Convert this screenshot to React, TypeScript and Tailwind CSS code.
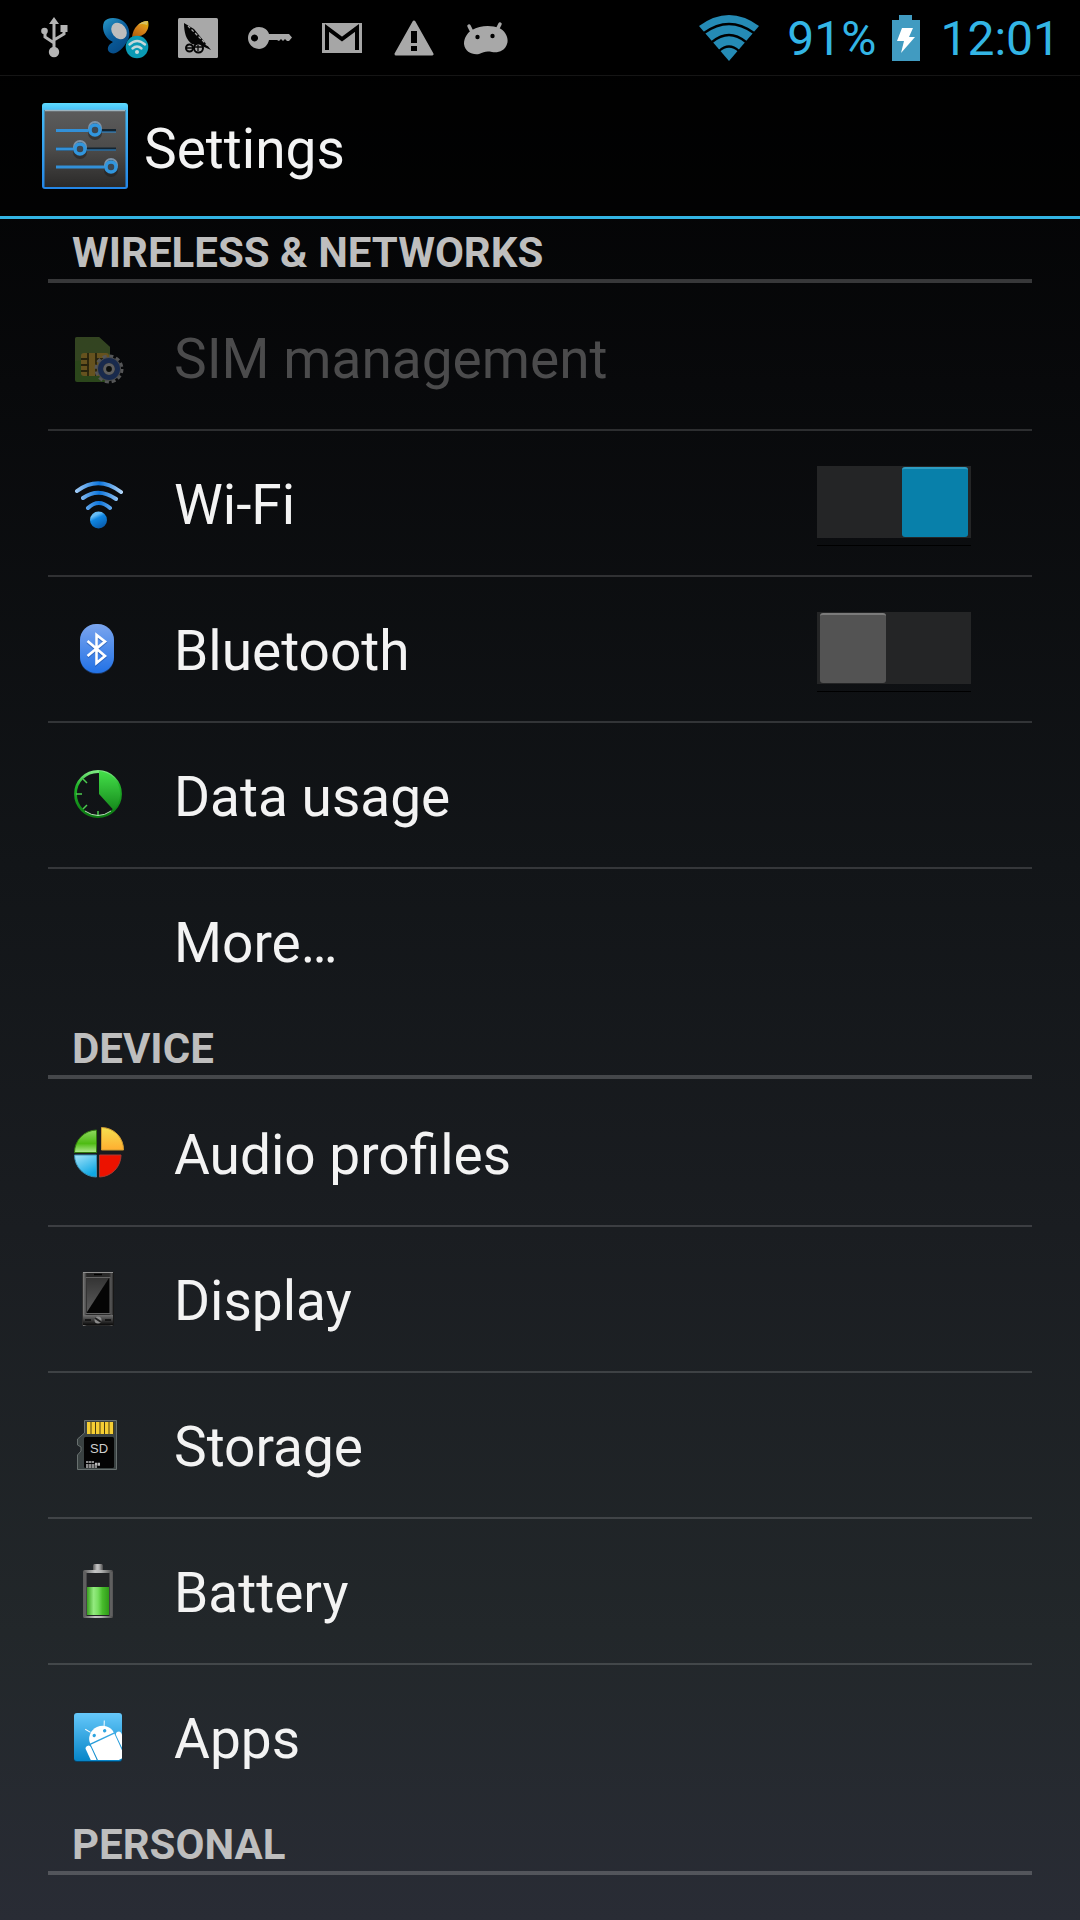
import { useState, type ReactNode } from "react";

function UsbIcon() {
  return (
    <svg width="28" height="42" viewBox="0 0 28 42" fill="none" stroke="#b4b4b4" strokeWidth="3">
      <path d="M14 6V34M14 26L5 20V13M14 23L24 17V10" />
      <path d="M14 0L19 7H9Z M20.5 8h7v7h-7z" fill="#b4b4b4" stroke="none" />
      <circle cx="4.5" cy="14" r="3.3" fill="#b4b4b4" stroke="none" />
      <circle cx="14" cy="35" r="5.2" fill="#b4b4b4" stroke="none" />
    </svg>
  );
}

function ButterflyIcon() {
  return (
    <svg width="46" height="42" viewBox="0 0 46 42">
      <defs>
        <linearGradient id="bfWing" x1="0" y1="0" x2="0.6" y2="1">
          <stop offset="0" stopColor="#2a9bc9" />
          <stop offset="0.5" stopColor="#0a5e9c" />
          <stop offset="1" stopColor="#064a86" />
        </linearGradient>
        <linearGradient id="bfGold" x1="0.8" y1="0" x2="0.2" y2="1">
          <stop offset="0" stopColor="#e0b400" />
          <stop offset="0.4" stopColor="#d98a1c" />
          <stop offset="1" stopColor="#b35f0c" />
        </linearGradient>
      </defs>
      <path d="M1 5C4 0 14 0 20 4C26 8 28 17 25 23C20 32 13 38 8 36C3 34 4 28 10 25C2 22 -2 12 1 5Z" fill="url(#bfWing)" />
      <ellipse cx="16" cy="14" rx="7" ry="9" transform="rotate(-38 16 14)" fill="#bdbdbd" />
      <path d="M29 20C30 11 36 4 45 4C47 11 43 18 36 19Z" fill="url(#bfGold)" />
      <path d="M35 8Q39 4 45 4L44 8Q39 6 35 8Z" fill="#d8c060" />
      <circle cx="34" cy="30" r="11.3" fill="#0a9ab4" />
      <path d="M26.5 27.5Q34 20.5 42 27.5M29.5 31.5Q34 27.5 38.5 31.5" fill="none" stroke="#c6d8da" strokeWidth="2.4" strokeLinecap="round" />
      <circle cx="34" cy="35" r="2" fill="#c6d8da" />
    </svg>
  );
}

function DishIcon() {
  return (
    <svg width="40" height="40" viewBox="0 0 40 40">
      <rect width="40" height="40" rx="1.5" fill="#a8a8a8" />
      <path d="M6 5C6 14 8 22 14 26L24 28L33 32L25 22L16 11Z" fill="#050505" />
      <path d="M10 8L31 29" stroke="#a8a8a8" strokeWidth="1.3" strokeDasharray="3 2" />
      <g fill="#a8a8a8" stroke="#050505" strokeWidth="2">
        <circle cx="11.5" cy="30" r="3.5" />
        <circle cx="20.5" cy="30" r="4.5" />
      </g>
      <path d="M9 30h5M17 29h7M20 27v6" stroke="#050505" strokeWidth="1.3" />
    </svg>
  );
}

function KeyIcon() {
  return (
    <svg width="44" height="24" viewBox="0 0 44 24" fill="#a8a8a8">
      <path
        fillRule="evenodd"
        d="M11 1C16 1 20 4 21 8H41L44 11.5L41 15H39L37 13L35 15L33 13L31 15L29 14H21C20 19 16 23 11 23A11 11 0 0 1 11 1ZM6.5 8.5a3.5 3.5 0 1 0 .01 0Z"
      />
    </svg>
  );
}

function GmailIcon() {
  return (
    <svg width="40" height="30" viewBox="0 0 40 30">
      <path d="M0 0H40V30H0Z" fill="#a6a6a6" />
      <path d="M5 27V5L20 16L35 5V27" fill="none" stroke="#000" strokeWidth="4" />
    </svg>
  );
}

function WarningIcon() {
  return (
    <svg width="40" height="36" viewBox="0 0 40 36">
      <path d="M20 2L38 34H2Z" fill="#a8a8a8" stroke="#a8a8a8" strokeWidth="3" strokeLinejoin="round" />
      <path d="M17 11h6v12h-6zM17 26h6v5h-6z" fill="#000" />
    </svg>
  );
}

function DroidHeadIcon() {
  return (
    <svg width="44" height="34" viewBox="0 0 44 34">
      <path d="M5 5L8 11M36 3L33 9" stroke="#a8a8a8" strokeWidth="3.5" strokeLinecap="round" />
      <path d="M8 9C16 4 28 4 35 7C42 10 45 18 43 23C41 30 34 32 28 31C22 30 20 31 15 33C8 34 1 31 0 23C0 17 3 12 8 9Z" fill="#a8a8a8" />
      <circle cx="13.5" cy="16" r="2.2" fill="#000" />
      <circle cx="28.5" cy="15" r="2.2" fill="#000" />
    </svg>
  );
}

function SignalIcon() {
  return (
    <svg width="60" height="48" viewBox="0 0 60 48">
      <path d="M0 12Q30 -10 60 12L30 47Z" fill="#258bb5" />
      <path d="M5 19Q30 1 55 19M13 28Q30 14 47 28M20 37Q30 28 40 37" fill="none" stroke="#000" strokeWidth="2.3" />
    </svg>
  );
}

function ChargingIcon() {
  return (
    <svg width="28" height="46" viewBox="0 0 28 46">
      <path d="M7 0h13v5h8v41H0V5h7z" fill="#419bc1" />
      <path d="M10 13H21L17 22H23L9 38L12 26H5Z" fill="#fff" />
    </svg>
  );
}

function SettingsIcon() {
  return (
    <svg width="86" height="86" viewBox="0 0 86 86">
      <defs>
        <linearGradient id="frame" x1="0" y1="0" x2="0" y2="1">
          <stop offset="0" stopColor="#5fdcff" />
          <stop offset="0.1" stopColor="#43b9f5" />
          <stop offset="1" stopColor="#2385e6" />
        </linearGradient>
        <linearGradient id="plate" x1="0" y1="0" x2="0" y2="1">
          <stop offset="0" stopColor="#5c5c5c" />
          <stop offset="0.5" stopColor="#4c4b4a" />
          <stop offset="1" stopColor="#2b2a29" />
        </linearGradient>
      </defs>
      <rect width="86" height="86" rx="3" fill="url(#frame)" />
      <rect x="2.5" y="7" width="81" height="77" fill="url(#plate)" />
      <path d="M3 7.5H83" stroke="#9db4bf" strokeWidth="1.5" />
      <path d="M14 27.5H74M14 46H74" stroke="#142430" strokeWidth="3" />
      <g stroke="#3290d8" strokeWidth="3">
        <path d="M14 27.5H48M14 46H34M14 64H64" />
        <path d="M58 29H74M44 47H74" strokeWidth="1" />
      </g>
      {[
        [53, 27],
        [38, 46],
        [69, 64],
      ].map(([x, y]) => (
        <g key={x}>
          <circle cx={x} cy={y + 3} r="7" fill="#1d1c1c" opacity="0.5" />
          <circle cx={x} cy={y - 2} r="6" fill="none" stroke="#7d93a8" strokeWidth="2" />
          <circle cx={x} cy={y} r="5" fill="#3c4650" stroke="#3196de" strokeWidth="3.5" />
        </g>
      ))}
    </svg>
  );
}

function SimIcon() {
  return (
    <svg width="56" height="56" viewBox="0 -4 56 56" opacity="0.45">
      <path d="M5 6Q5 4 7 4H29L40 14V47Q40 49 38 49H7Q5 49 5 47Z" fill="#57912f" />
      <path d="M7 4H29L40 14V24L5 28V6Q5 4 7 4Z" fill="#748c48" opacity="0.6" />
      <rect x="11" y="20" width="28" height="23" rx="3" fill="#d9ad38" />
      <path d="M18 20V43M26 20V43M11 26H19M11 32H19M11 38H19M26 26H39" stroke="#4f4512" strokeWidth="1.8" />
      <circle cx="39" cy="36" r="13" fill="none" stroke="#b4b4b4" strokeWidth="3" strokeDasharray="4 2.8" />
      <circle cx="39" cy="36" r="12" fill="#9e9e9e" />
      <circle cx="39" cy="36" r="8.5" fill="#16202a" stroke="#2e549e" strokeWidth="5" />
      <circle cx="39" cy="36" r="4.4" fill="#10140c" stroke="#c6c6c6" strokeWidth="3" />
    </svg>
  );
}

function WifiIcon() {
  return (
    <svg width="56" height="56" viewBox="0 -2 56 56">
      <defs>
        <linearGradient id="wArc" x1="5" x2="54" y1="0" y2="0" gradientUnits="userSpaceOnUse">
          <stop offset="0" stopColor="#a6cef6" />
          <stop offset="0.5" stopColor="#0d76dd" />
          <stop offset="1" stopColor="#c0ddfa" />
        </linearGradient>
        <linearGradient id="wDot" x1="0" x2="0.5" y1="0" y2="1">
          <stop offset="0.3" stopColor="#66bdf6" />
          <stop offset="0.5" stopColor="#0f86e2" />
          <stop offset="1" stopColor="#0a5fb0" />
        </linearGradient>
      </defs>
      <path
        d="M7 14Q28.5 -2 51 15M13 21Q28.5 10 46 22M18 31Q28.5 21 40 31"
        fill="none"
        stroke="url(#wArc)"
        strokeWidth="4"
        strokeLinecap="round"
      />
      <circle cx="28.5" cy="43" r="8.5" fill="url(#wDot)" />
    </svg>
  );
}

function BluetoothIcon() {
  return (
    <svg width="56" height="56" viewBox="0 0 56 56">
      <defs>
        <linearGradient id="bt" x1="0" y1="0" x2="0" y2="1">
          <stop offset="0" stopColor="#7ba5ee" />
          <stop offset="1" stopColor="#2272e6" />
        </linearGradient>
      </defs>
      <rect x="10" y="4" width="34" height="49" rx="16" fill="#1b355f" />
      <rect x="10" y="3" width="34" height="49" rx="16" fill="url(#bt)" />
      <path d="M17.5 21L35 36L26.5 43V15L35 21.5L17.5 36" fill="none" stroke="#1b4d9c" strokeWidth="3" opacity="0.5" />
      <path d="M17.5 20L35 35L26.5 42V14L35 20.5L17.5 35" fill="none" stroke="#fff" strokeWidth="2.6" />
    </svg>
  );
}

function DataIcon() {
  return (
    <svg width="56" height="56" viewBox="0 0 56 56">
      <defs>
        <linearGradient id="dFill" x1="0" y1="0" x2="0" y2="1">
          <stop offset="0" stopColor="#44e04a" />
          <stop offset="1" stopColor="#168a1c" />
        </linearGradient>
        <linearGradient id="dRing" x1="0" y1="0" x2="0" y2="1">
          <stop offset="0" stopColor="#7be880" />
          <stop offset="0.3" stopColor="#22b42a" />
          <stop offset="1" stopColor="#0c7a12" />
        </linearGradient>
      </defs>
      <circle cx="28" cy="27" r="22.5" fill="none" stroke="url(#dRing)" strokeWidth="2.8" />
      <path d="M29 27V4A23 23 0 0 1 43.5 43Z" fill="url(#dFill)" />
      <path d="M6 27H12M28 44V49M13 12L17 16M13 42L17 38" stroke="#4ccc50" strokeWidth="1.5" />
      <path d="M15 44Q28 53 41 44" fill="none" stroke="#b4dcb6" strokeWidth="1" />
    </svg>
  );
}

function AudioIcon() {
  return (
    <svg width="56" height="56" viewBox="0 1 56 56">
      <defs>
        <linearGradient id="aG" x1="0" y1="0" x2="0" y2="1">
          <stop offset="0" stopColor="#8fd860" />
          <stop offset="0.6" stopColor="#4fbc14" />
          <stop offset="1" stopColor="#b0e890" />
        </linearGradient>
        <linearGradient id="aY" x1="0" y1="0" x2="0" y2="1">
          <stop offset="0" stopColor="#f4e050" />
          <stop offset="1" stopColor="#ffae30" />
        </linearGradient>
        <linearGradient id="aB" x1="0" y1="0" x2="0.5" y2="1">
          <stop offset="0" stopColor="#a4e4fa" />
          <stop offset="1" stopColor="#10a8e4" />
        </linearGradient>
      </defs>
      <path d="M26.5 28.5H4.5A22.5 22.5 0 0 1 26.5 6Z" fill="url(#aG)" stroke="#347c10" />
      <path d="M31.5 26V3.5A22 22 0 0 1 53.5 26Z" fill="url(#aY)" stroke="#ce9a30" />
      <path d="M26.5 31V53A22 22 0 0 1 4.5 31Z" fill="url(#aB)" stroke="#3a90b4" />
      <path d="M29.5 31H51A22 22 0 0 1 29.5 53Z" fill="#ec1200" stroke="#a83a32" />
    </svg>
  );
}

function DisplayIcon() {
  return (
    <svg width="56" height="56" viewBox="0 0 56 56">
      <defs>
        <linearGradient id="phBody" x1="0" x2="1" y1="0" y2="0">
          <stop offset="0" stopColor="#0c0c0c" />
          <stop offset="0.05" stopColor="#7a7a7a" />
          <stop offset="0.15" stopColor="#242424" />
          <stop offset="0.85" stopColor="#2c2c2c" />
          <stop offset="0.93" stopColor="#505050" />
          <stop offset="1" stopColor="#080808" />
        </linearGradient>
        <linearGradient id="phGlass" x1="0" x2="0" y1="0" y2="1">
          <stop offset="0" stopColor="#343434" />
          <stop offset="1" stopColor="#5c5c5c" />
        </linearGradient>
        <linearGradient id="phKeys" x1="0" x2="0" y1="0" y2="1">
          <stop offset="0" stopColor="#707070" />
          <stop offset="1" stopColor="#0a0a0a" />
        </linearGradient>
      </defs>
      <rect x="12" y="1" width="32" height="54" rx="1.5" fill="url(#phBody)" />
      <path d="M13 1.5H43" stroke="#909090" />
      <path d="M24 3.5H32" stroke="#000" strokeWidth="1.5" />
      <rect x="16" y="6.5" width="24" height="36" fill="#050505" stroke="#646464" />
      <path d="M17 7H39L17 41Z" fill="url(#phGlass)" />
      <path d="M13 44H43V54H13Z" fill="url(#phKeys)" />
      <circle cx="28" cy="49" r="3.5" fill="#8c8c8c" />
      <path d="M25 47l6 4" stroke="#202020" strokeWidth="2" />
      <path d="M15 49H21M35 49H41" stroke="#0a0a0a" strokeWidth="1.5" />
    </svg>
  );
}

function StorageIcon() {
  return (
    <svg width="56" height="56" viewBox="0 0 56 56">
      <path d="M14.5 3.5H46.5V52.5H7.5V38L11 34V30L7.5 28V22L14.5 16Z" fill="#3a4242" stroke="#68706f" />
      <path d="M17 5h27v12H17z" fill="#4a3d10" />
      {[17, 21.5, 26, 30.5, 35, 39.5].map((x) => (
        <rect key={x} x={x} y="5" width="3.5" height="12" fill="#f5ce34" />
      ))}
      <rect x="14" y="20" width="30" height="31" rx="1.5" fill="#040404" />
      <text x="20" y="36" fill="#d0d0d0" fontSize="13" fontFamily="Liberation Sans, sans-serif">SD</text>
      <path d="M16 45H24M16 48H30M16 50H27M25 46.5H30" stroke="#b8b8b8" strokeWidth="1.5" strokeDasharray="2.5 .5" />
    </svg>
  );
}

function BatteryIcon() {
  return (
    <svg width="56" height="56" viewBox="0 0 56 56">
      <defs>
        <linearGradient id="metal" x1="0" x2="1" y1="0" y2="0">
          <stop offset="0" stopColor="#555" />
          <stop offset="0.4" stopColor="#c4c4c4" />
          <stop offset="0.6" stopColor="#b4b4b4" />
          <stop offset="1" stopColor="#484848" />
        </linearGradient>
        <linearGradient id="charge" x1="0" x2="1" y1="0" y2="0">
          <stop offset="0" stopColor="#38a01e" />
          <stop offset="0.3" stopColor="#94ea80" />
          <stop offset="0.5" stopColor="#78de60" />
          <stop offset="0.7" stopColor="#48bc2c" />
          <stop offset="1" stopColor="#2f9a18" />
        </linearGradient>
      </defs>
      <rect x="23" y="1" width="10" height="8" rx="1.5" fill="url(#metal)" />
      <rect x="13" y="7" width="30" height="48" rx="1.5" fill="url(#metal)" />
      <path d="M15 9V53M41 9V53" stroke="#606060" strokeWidth="3" />
      <rect x="16.5" y="10" width="23" height="43" fill="#222326" />
      <rect x="17" y="24" width="22" height="28" fill="url(#charge)" />
    </svg>
  );
}

function AppsIcon() {
  return (
    <svg width="56" height="56" viewBox="0 0 56 56">
      <defs>
        <linearGradient id="tile" x1="0" y1="0" x2="0" y2="1">
          <stop offset="0" stopColor="#66c8fa" />
          <stop offset="1" stopColor="#0685c8" />
        </linearGradient>
        <clipPath id="tileClip">
          <rect x="4" y="4" width="48" height="47" rx="2" />
        </clipPath>
      </defs>
      <rect x="4" y="6" width="48" height="47" rx="3" fill="#07456a" />
      <rect x="4" y="4" width="48" height="48" rx="3" fill="url(#tile)" />
      <g clipPath="url(#tileClip)">
        <g transform="translate(32 29) rotate(-25)" fill="#fff">
          <path d="M-13 0A13 12 0 0 1 13 0Z" />
          <path d="M-8 -10L-11.5 -15M7 -10L9.5 -15" stroke="#fff" strokeWidth="1" />
          <path d="M-13 1.5H13V24Q13 27 10 27H-10Q-13 27 -13 24Z" />
          <rect x="-19.5" y="1" width="5.5" height="18" rx="2.7" />
          <rect x="14" y="1" width="5.5" height="18" rx="2.7" />
          <circle cx="-6" cy="-5.5" r="1.7" fill="#2ea4e0" />
          <circle cx="5.5" cy="-5.5" r="1.7" fill="#2ea4e0" />
        </g>
      </g>
    </svg>
  );
}

function Row({ label, icon, disabled, control }: { label: string; icon?: ReactNode; disabled?: boolean; control?: ReactNode }) {
  return (
    <li className="box-content flex h-36 items-center">
      <button
        type="button"
        disabled={disabled}
        className="flex h-full flex-1 items-center gap-12 pl-[22px] text-left text-[55px] leading-[64px] text-[#f3f3f3] disabled:text-[#4b4b4c]"
      >
        <span className="h-14 w-14 shrink-0">{icon}</span>
        <span className="pt-1">{label}</span>
      </button>
      {control}
    </li>
  );
}

function Toggle({ label, initial }: { label: string; initial: boolean }) {
  const [on, setOn] = useState(initial);
  return (
    <label className="relative mt-1.5 mr-[61px] h-20 w-[154px] shrink-0 border-b border-black">
      <input type="checkbox" role="switch" aria-label={label} checked={on} onChange={() => setOn(!on)} className="peer sr-only" />
      <span className="flex h-18 justify-start bg-[#242526] px-[3px] py-px peer-checked:justify-end peer-checked:[&>span]:border-[#2e9cc2] peer-checked:[&>span]:bg-[#0880aa]">
        <span className="h-[70px] w-[66px] rounded-[3px] border-t-2 border-[#7b7b7b] bg-[#535353]" />
      </span>
    </label>
  );
}

function Section({ title, children }: { title: string; children?: ReactNode }) {
  return (
    <section>
      <h2 className="border-b-4 border-white/20 px-6 pt-2.5 pb-0.5 text-[42px] leading-[48px] font-bold text-[#bebebe]">{title}</h2>
      {children && <ul className="divide-y-2 divide-white/15 py-0.5">{children}</ul>}
    </section>
  );
}

const notifications = [UsbIcon, ButterflyIcon, DishIcon, KeyIcon, GmailIcon, WarningIcon, DroidHeadIcon];

export default function App() {
  return (
    <div className="min-h-screen bg-[linear-gradient(to_bottom,#000_0%,#08090b_20%,#121518_45%,#1a1d21_64%,#22272a_85%,#292c35_100%)] font-['Roboto',sans-serif]">
      <div className="flex h-[76px] items-center justify-between border-b border-[#151515] bg-black pr-5 pl-[18px]">
        <div className="flex items-center">
          {notifications.map((Icon, i) => (
            <span key={i} className="flex w-18 justify-center">
              <Icon />
            </span>
          ))}
        </div>
        <div className="flex items-center text-[48px] leading-none text-[#33b5e5]">
          <SignalIcon />
          <span className="mr-4 ml-7 pt-0.5">91%</span>
          <ChargingIcon />
          <time className="ml-5 pt-0.5">12:01</time>
        </div>
      </div>
      <header className="flex h-[143px] items-center gap-4 border-b-3 border-[#33b5e5] bg-black/50 px-[42px]">
        <SettingsIcon />
        <h1 className="pt-1.5 text-[55px] leading-[64px] text-[#f3f3f3]">Settings</h1>
      </header>
      <main className="px-12">
        <Section title="WIRELESS & NETWORKS">
          <Row label="SIM management" icon={<SimIcon />} disabled />
          <Row label="Wi-Fi" icon={<WifiIcon />} control={<Toggle label="Wi-Fi" initial />} />
          <Row label="Bluetooth" icon={<BluetoothIcon />} control={<Toggle label="Bluetooth" initial={false} />} />
          <Row label="Data usage" icon={<DataIcon />} />
          <Row label="More…" />
        </Section>
        <Section title="DEVICE">
          <Row label="Audio profiles" icon={<AudioIcon />} />
          <Row label="Display" icon={<DisplayIcon />} />
          <Row label="Storage" icon={<StorageIcon />} />
          <Row label="Battery" icon={<BatteryIcon />} />
          <Row label="Apps" icon={<AppsIcon />} />
        </Section>
        <Section title="PERSONAL" />
      </main>
    </div>
  );
}
